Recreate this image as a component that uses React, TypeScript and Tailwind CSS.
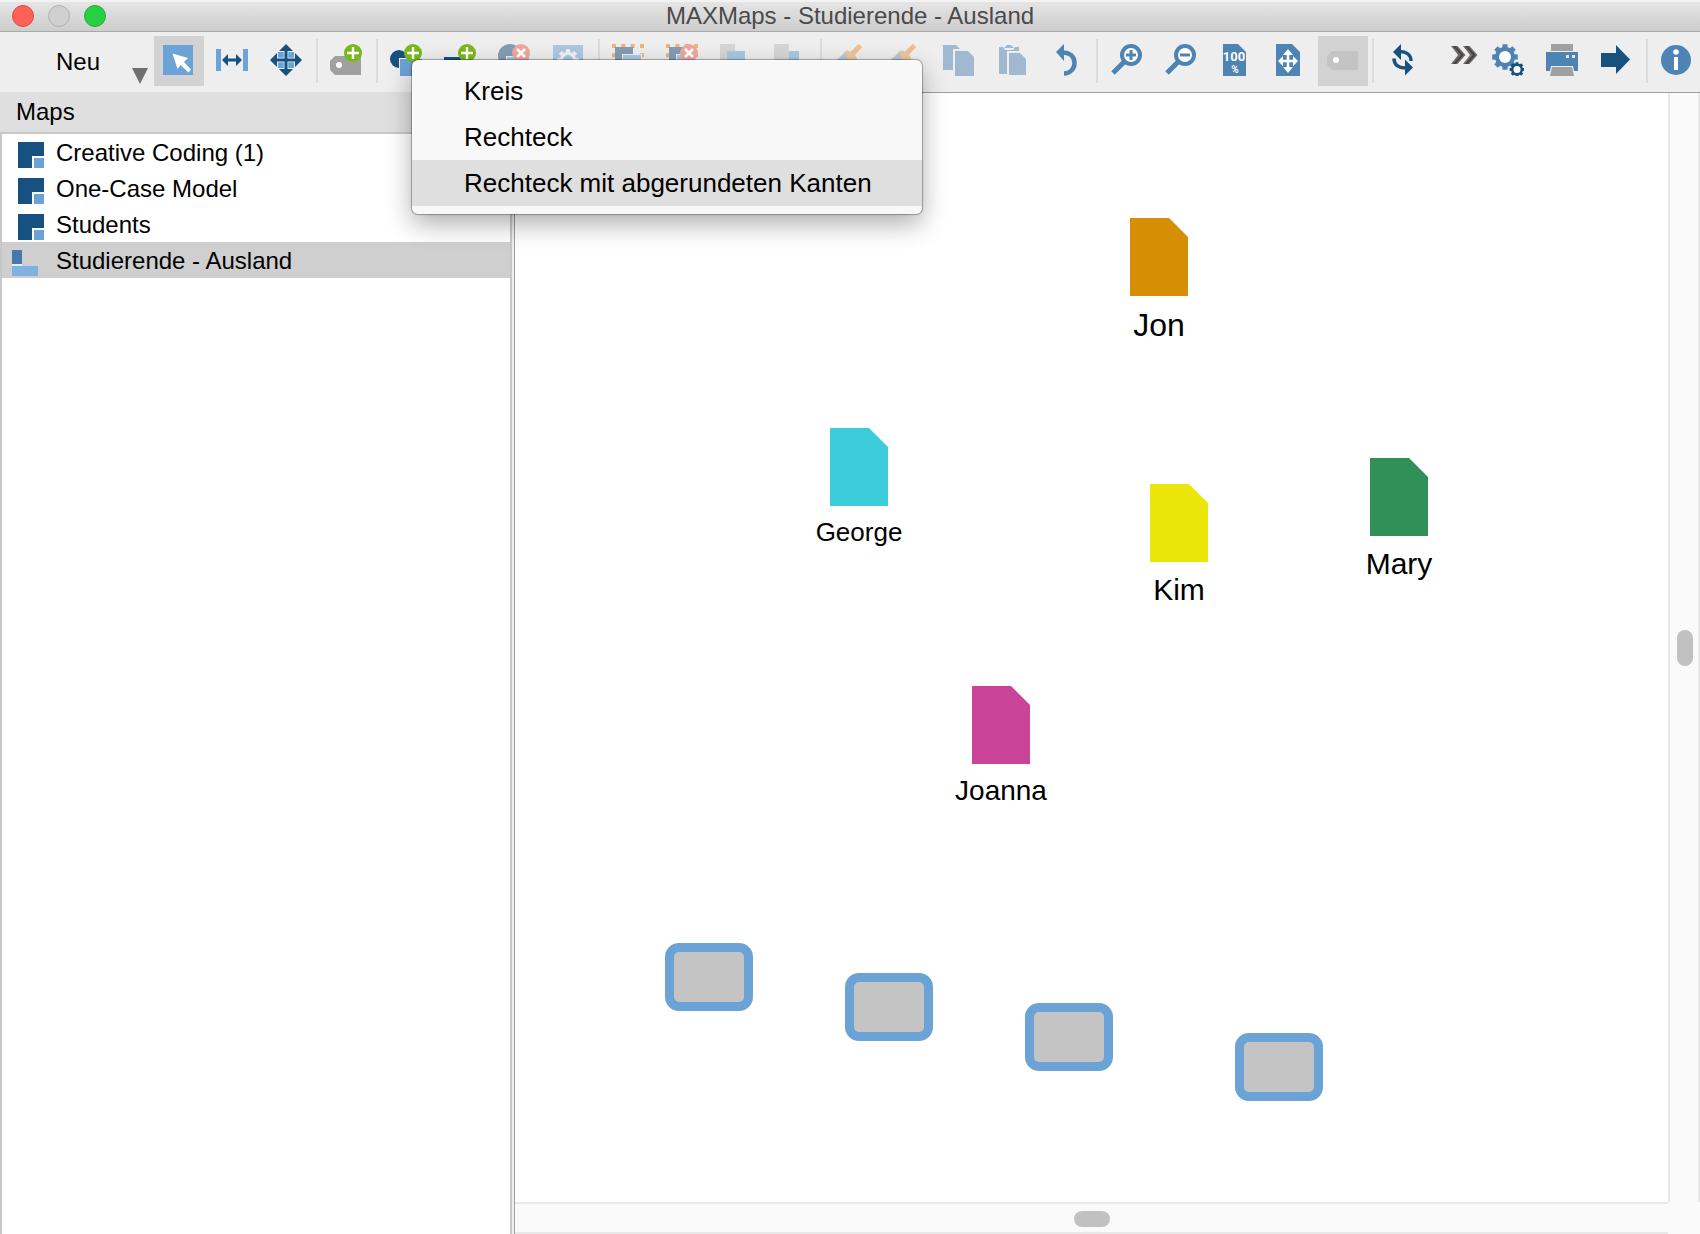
import type { ReactNode } from "react";
import { clsx } from "clsx";

const NAVY = "#17517f";
const BLUE = "#4d84b3";
const SKY = "#6ca3d6";
const GRAY = "#a0a0a0";

const gearPoints = (cx: number, cy: number, outer: number, inner: number) => {
  const teeth = 8;
  const points: string[] = [];
  for (let i = 0; i < teeth; i++) {
    const mid = (i * 2 * Math.PI) / teeth;
    [
      [-0.27, inner],
      [-0.19, outer],
      [0.19, outer],
      [0.27, inner],
    ].forEach(([offset, r]) => {
      const a = mid + offset;
      points.push(
        `${(cx + r * Math.cos(a)).toFixed(2)},${(cy + r * Math.sin(a)).toFixed(2)}`
      );
    });
  }
  return points.join(" ");
};

const Icon = ({ children }: { children: ReactNode }) => (
  <svg viewBox="0 0 32 32" className="size-8 shrink-0" aria-hidden="true">
    {children}
  </svg>
);

const PlusBadge = () => (
  <>
    <circle cx="23" cy="9" r="9" fill="#78b81c" />
    <path d="M23 3v12M17 9h12" stroke="#fff" strokeWidth="2.4" />
  </>
);

const DeleteBadge = () => (
  <>
    <circle cx="23" cy="9" r="9" fill="#eea79d" />
    <path d="M19 5l8 8M27 5l-8 8" stroke="#fff" strokeWidth="2.6" />
  </>
);

const SelectIcon = () => (
  <Icon>
    <path d="M1 1h30v30H1z" fill={SKY} />
    <path d="M10.5 9.5L26 14l-4 4 7 7.500-2.500 3-8-7.500-3 4z" fill="#fff" />
  </Icon>
);

const SpreadIcon = () => (
  <Icon>
    <path d="M0 5h5v22H0zM27 5h5v22h-5z" fill={SKY} />
    <path d="M6 16l6-6v4.5h8V10l6 6-6 6v-4.5h-8V22z" fill={NAVY} />
  </Icon>
);

const MoveIcon = () => (
  <Icon>
    <path d="M8 8h16v16H8z" fill={SKY} />
    <path d="M16 6v20M6 16h20" stroke="#eee" strokeWidth="4.4" />
    <path d="M16 5v22M5 16h22" stroke={NAVY} strokeWidth="3" />
    <path
      d="M16 0l7 7H9zM16 32l7-7H9zM0 16l7-7v14zM32 16l-7-7v14z"
      fill={NAVY}
    />
  </Icon>
);

const NewCodeIcon = () => (
  <Icon>
    <path d="M5 12h26v19H5l-5-5v-9z" fill={GRAY} />
    <circle cx="9" cy="21" r="3" fill="#fff" />
    <PlusBadge />
  </Icon>
);

const NewShapeIcon = () => (
  <Icon>
    <circle cx="9" cy="15" r="9" fill={NAVY} />
    <path d="M9 14h23v18H9z" fill="#eee" />
    <path d="M10 15h22v17H10z" fill={SKY} />
    <PlusBadge />
  </Icon>
);

const NewLineIcon = () => (
  <Icon>
    <path d="M0 13h17v4H0z" fill={NAVY} />
    <PlusBadge />
  </Icon>
);

const DeleteShapeIcon = () => (
  <Icon>
    <circle cx="12" cy="12" r="12" fill="#839db5" />
    <path d="M8 12h24v20H8z" fill="#eee" />
    <path d="M9 13h22v18H9z" fill="#a9c8e2" />
    <DeleteBadge />
  </Icon>
);

const MapSettingsIcon = () => (
  <Icon>
    <path d="M1 1h30v30H1z" fill="#a9c8e2" />
    <polygon points={gearPoints(16, 16, 11, 8)} fill="#f3f3f3" />
    <circle cx="16" cy="16" r="5" fill="#a9c8e2" />
  </Icon>
);

const SelectAllIcon = ({ remove = false }: { remove?: boolean }) => (
  <Icon>
    <path
      d="M0 2h32M2 0v32M30 0v32"
      stroke="#eeb27b"
      strokeWidth="4"
      strokeDasharray="4 5.333"
    />
    <path d="M3 3h18v18H3z" fill="#839db5" />
    <path d="M10 10h20v16H10z" fill="#eee" />
    <path d="M11 11h18v15H11z" fill="#a9c8e2" />
    {remove && <DeleteBadge />}
  </Icon>
);

const BringForwardIcon = () => (
  <Icon>
    <path d="M0 0h15v20H0z" fill="#d5d5d5" />
    <path d="M7 7h18v18H7z" fill="#a9c8e2" />
  </Icon>
);

const SendBackIcon = () => (
  <Icon>
    <path d="M7 7h18v18H7z" fill="#a9c8e2" />
    <path d="M0 0h15v20H0z" fill="#d5d5d5" />
  </Icon>
);

const BrushIcon = () => (
  <Icon>
    <path d="M26.500 1.500L16 12" stroke="#f0bf92" strokeWidth="5" />
    <path d="M13 6l4 2 5 4 2 6H13l-3-9z" fill="#ecc6a2" />
    <path d="M11 8l4 10H0l6-5z" fill="#b9c6d2" />
  </Icon>
);

const CopyIcon = () => (
  <Icon>
    <path d="M1 1h13l4 4h-7v21H1z" fill="#a0b8d0" />
    <path d="M13 7h13l6 6v19H13z" fill="#a0b8d0" />
  </Icon>
);

const PasteIcon = () => (
  <Icon>
    <path d="M3 3h4l2 3h8l2-3h4v4H11v23H3z" fill="#a0b8d0" />
    <path d="M8 4l3-3h4l3 3z" fill="#a0b8d0" />
    <path d="M13 9h11l6 6v16H13z" fill="#a0b8d0" />
  </Icon>
);

const UndoIcon = () => (
  <Icon>
    <path
      d="M12 8.500c8 0 12.500 4 12.500 10.500 0 6-4.500 10.500-10.500 10.500"
      fill="none"
      stroke={BLUE}
      strokeWidth="4.500"
    />
    <path d="M6 8l8-8v17z" fill={BLUE} />
  </Icon>
);

const ZoomIcon = ({ sign }: { sign: "in" | "out" }) => (
  <Icon>
    <path d="M14 18L3 29" stroke={BLUE} strokeWidth="5" />
    <circle cx="21" cy="11" r="9" fill="#fff" stroke={BLUE} strokeWidth="4" />
    <path
      d={sign === "in" ? "M21 6v10M16 11h10" : "M16 11h10"}
      stroke={BLUE}
      strokeWidth="3"
    />
  </Icon>
);

const FullSizeIcon = () => (
  <Icon>
    <path d="M5 0h15l8 8v24H5z" fill={BLUE} />
    <text
      x="16"
      y="17"
      textAnchor="middle"
      fill="#fff"
      className="font-[Roboto,sans-serif] text-[13px] font-bold"
    >
      100
    </text>
    <text
      x="17"
      y="29"
      textAnchor="middle"
      fill="#fff"
      className="font-[Roboto,sans-serif] text-[10px] font-bold"
    >
      %
    </text>
  </Icon>
);

const FitPageIcon = () => (
  <Icon>
    <path d="M4 0h16l8 8v24H4z" fill={BLUE} />
    <path d="M16 8v18M9 17h14" stroke="#fff" strokeWidth="2.500" />
    <path
      d="M16 5l5 6H11zM16 29l5-6H11zM6 17l5-5v10zM26 17l-5-5v10z"
      fill="#fff"
    />
  </Icon>
);

const LabelIcon = () => (
  <Icon>
    <path d="M6 7h26v19H6l-5-5v-9z" fill="#c3c3c3" />
    <circle cx="10" cy="16" r="3" fill="#fff" />
  </Icon>
);

const RefreshIcon = () => (
  <Icon>
    <path
      d="M14 7.500c6 0 11 3 11 9.500M19 24c-6 0-11-3-11-9.500"
      fill="none"
      stroke={NAVY}
      strokeWidth="3.500"
    />
    <path d="M7 8l8-8v16zM27 23.500l-8 8v-16z" fill={NAVY} />
  </Icon>
);

const MoreIcon = () => (
  <Icon>
    <path
      d="M3 2h6.500l8 9-8 9H3l7-9zM15 2h6.500l8 9-8 9H15l7-9z"
      fill="#6f6d6b"
    />
    <path
      d="M5 2h2.500l8 9-8 9H5l8-9zM17 2h2.500l8 9-8 9H17l8-9z"
      fill="#454341"
    />
  </Icon>
);

const SettingsIcon = () => (
  <Icon>
    <polygon points={gearPoints(13, 13, 13, 10)} fill={BLUE} />
    <circle cx="13" cy="13" r="6" fill="#fff" />
    <polygon points={gearPoints(25, 25.5, 7.5, 6)} fill={NAVY} />
    <circle cx="25" cy="25.5" r="3.500" fill="#fff" />
  </Icon>
);

const PrintIcon = () => (
  <Icon>
    <path d="M5 0h22v7H5z" fill={GRAY} />
    <path d="M0 8h32v19H0z" fill={BLUE} />
    <path d="M20 11h3v3h-3zM26 11h3v3h-3z" fill="#dbe6f0" />
    <path d="M5 22h22l2 10H3z" fill="#eee" />
    <path d="M6 23h20l2 9H4z" fill={GRAY} />
  </Icon>
);

const ExportIcon = () => (
  <Icon>
    <path d="M1 9h15V1l14 14.500L16 30v-7H1z" fill={NAVY} />
  </Icon>
);

const InfoIcon = () => (
  <Icon>
    <circle cx="16" cy="16" r="15" fill={BLUE} />
    <circle cx="16" cy="8" r="2.800" fill="#fff" />
    <path d="M14 13h4v13h-4z" fill="#fff" />
  </Icon>
);

type ToolProps = {
  label: string;
  active?: boolean;
  disabled?: boolean;
  children: ReactNode;
};

const Tool = ({ label, active, disabled, children }: ToolProps) => (
  <button
    type="button"
    aria-label={label}
    disabled={disabled}
    className={clsx(
      "flex h-[50px] w-[50px] shrink-0 items-center justify-center pr-0.5 pb-0.5",
      active && "bg-[#d2d2d2]"
    )}
  >
    {children}
  </button>
);

const Separator = () => (
  <div className="h-11 w-0.5 shrink-0 bg-[#dcdcdc]" />
);

const TitleBar = () => (
  <header className="relative flex h-8 shrink-0 items-center justify-center border-t-2 border-b border-t-[#f3f3f3] border-b-[#a9a9a9] bg-linear-to-b from-[#e5e5e5] to-[#cdcdcd] pb-0.5">
    <div className="absolute left-3 flex gap-3.5">
      <button
        type="button"
        aria-label="Schließen"
        className="size-[22px] rounded-full border border-[#e2463f] bg-[#ff6058]"
      />
      <button
        type="button"
        aria-label="Minimieren"
        className="size-[22px] rounded-full border border-[#b0b0b0] bg-[#d0d0d0]"
      />
      <button
        type="button"
        aria-label="Zoomen"
        className="size-[22px] rounded-full border border-[#1fae31] bg-[#28cf41]"
      />
    </div>
    <h1 className="text-2xl leading-7 text-[#4a4a4a]">
      MAXMaps - Studierende - Ausland
    </h1>
  </header>
);

const Toolbar = () => (
  <div className="flex h-[60px] shrink-0 items-center gap-1 overflow-hidden bg-[#eee] pb-0.5">
    <button
      type="button"
      className="flex h-[50px] w-[150px] shrink-0 items-center justify-between pt-0.5 pr-0.5 pl-14 text-2xl"
    >
      Neu
      <svg viewBox="0 0 16 16" className="mb-0.5 size-4 self-end">
        <path d="M0 0h16L8 16z" fill="#707070" />
      </svg>
    </button>
    <Tool label="Auswahl" active>
      <SelectIcon />
    </Tool>
    <Tool label="Abstand">
      <SpreadIcon />
    </Tool>
    <Tool label="Verschieben">
      <MoveIcon />
    </Tool>
    <Separator />
    <Tool label="Neuer Code">
      <NewCodeIcon />
    </Tool>
    <Separator />
    <Tool label="Neues Objekt">
      <NewShapeIcon />
    </Tool>
    <Tool label="Neue Linie">
      <NewLineIcon />
    </Tool>
    <Tool label="Objekt entfernen" disabled>
      <DeleteShapeIcon />
    </Tool>
    <Tool label="Objekteigenschaften" disabled>
      <MapSettingsIcon />
    </Tool>
    <Separator />
    <Tool label="Gruppieren" disabled>
      <SelectAllIcon />
    </Tool>
    <Tool label="Gruppierung aufheben" disabled>
      <SelectAllIcon remove />
    </Tool>
    <Tool label="Nach vorne" disabled>
      <BringForwardIcon />
    </Tool>
    <Tool label="Nach hinten" disabled>
      <SendBackIcon />
    </Tool>
    <Separator />
    <Tool label="Format kopieren" disabled>
      <BrushIcon />
    </Tool>
    <Tool label="Format übertragen" disabled>
      <BrushIcon />
    </Tool>
    <Tool label="Kopieren" disabled>
      <CopyIcon />
    </Tool>
    <Tool label="Einfügen" disabled>
      <PasteIcon />
    </Tool>
    <Tool label="Rückgängig">
      <UndoIcon />
    </Tool>
    <Separator />
    <Tool label="Vergrößern">
      <ZoomIcon sign="in" />
    </Tool>
    <Tool label="Verkleinern">
      <ZoomIcon sign="out" />
    </Tool>
    <Tool label="Originalgröße">
      <FullSizeIcon />
    </Tool>
    <Tool label="Einpassen">
      <FitPageIcon />
    </Tool>
    <Tool label="Beschriftungen" active>
      <LabelIcon />
    </Tool>
    <Separator />
    <Tool label="Aktualisieren">
      <RefreshIcon />
    </Tool>
    <button
      type="button"
      aria-label="Mehr"
      className="flex h-[50px] flex-1 items-center justify-end pb-0.5"
    >
      <MoreIcon />
    </button>
    <Tool label="Einstellungen">
      <SettingsIcon />
    </Tool>
    <Tool label="Drucken">
      <PrintIcon />
    </Tool>
    <Tool label="Exportieren">
      <ExportIcon />
    </Tool>
    <Separator />
    <button
      type="button"
      aria-label="Info"
      className="flex h-[50px] w-12 shrink-0 items-center justify-center pb-0.5"
    >
      <InfoIcon />
    </button>
  </div>
);

const maps = [
  { name: "Creative Coding (1)" },
  { name: "One-Case Model" },
  { name: "Students" },
  { name: "Studierende - Ausland", selected: true },
];

const MapIcon = ({ open }: { open?: boolean }) => (
  <svg
    viewBox="0 0 32 26"
    className="mb-0.5 h-[26px] w-8 shrink-0 self-end"
    aria-hidden="true"
  >
    {open ? (
      <>
        <path d="M0 0h10v14H0z" fill="#4679ab" />
        <path d="M0 14h10v2H0z" fill="#e8eef4" />
        <path d="M0 16h26v10H0z" fill="#7fb2e1" />
      </>
    ) : (
      <>
        <path d="M6 0h26v14H20v12H6z" fill={NAVY} />
        <path d="M22 16h10v10H22z" fill={SKY} />
      </>
    )}
  </svg>
);

const Sidebar = () => (
  <aside className="flex w-[512px] shrink-0 flex-col">
    <h2 className="h-10 bg-[#dfdfdf] pl-4 text-2xl leading-10">Maps</h2>
    <ul className="flex-1 border-2 border-b-0 border-[#c8c8c8] bg-white">
      {maps.map(({ name, selected }) => (
        <li key={name}>
          <button
            type="button"
            className={clsx(
              "flex h-9 w-full items-center gap-3 pt-0.5 pl-2.5 text-2xl",
              selected && "bg-[#cfcfcf]"
            )}
          >
            <MapIcon open={selected} />
            {name}
          </button>
        </li>
      ))}
    </ul>
  </aside>
);

const documents = [
  { name: "Jon", place: "left-[615px] top-[125px]", text: "text-[32px]", fill: "#d68f04" },
  { name: "George", place: "left-[315px] top-[335px]", text: "text-[26px]", fill: "#3dccdb" },
  { name: "Kim", place: "left-[635px] top-[391px]", text: "text-[30px]", fill: "#eae609" },
  { name: "Mary", place: "left-[855px] top-[365px]", text: "text-[30px]", fill: "#2f9158" },
  { name: "Joanna", place: "left-[457px] top-[593px]", text: "text-[28px]", fill: "#c94399" },
];

const shapes = [
  "left-[150px] top-[850px]",
  "left-[330px] top-[880px]",
  "left-[510px] top-[910px]",
  "left-[720px] top-[940px]",
];

const Canvas = () => (
  <main className="flex min-w-0 flex-1 flex-col border-t border-l border-[#a0a0a0] bg-[#fafafa]">
    <div className="flex min-h-0 flex-1">
      <div className="relative min-w-0 flex-1 overflow-hidden bg-white">
        {documents.map(({ name, place, text, fill }) => (
          <figure
            key={name}
            className={clsx("absolute flex w-[58px] flex-col items-center", place)}
          >
            <svg viewBox="0 0 58 78" className="h-[78px] w-[58px]">
              <path d="M0 0h39l19 19v59H0z" fill={fill} />
            </svg>
            <figcaption className={clsx("mt-[13px] leading-none whitespace-nowrap", text)}>
              {name}
            </figcaption>
          </figure>
        ))}
        {shapes.map((place) => (
          <div
            key={place}
            className={clsx(
              "absolute h-[68px] w-[88px] rounded-[14px] border-[9px] border-[#6ca3d6] bg-[#c4c4c4]",
              place
            )}
          />
        ))}
      </div>
      <div className="flex w-8 items-center justify-center border-x-2 border-[#e8e8e8] pl-0.5">
        <div className="h-9 w-4 rounded-full bg-[#c1c1c1]" />
      </div>
    </div>
    <div className="mr-8 flex h-8 shrink-0 items-center justify-center border-y-2 border-[#e8e8e8] pt-0.5">
      <div className="h-4 w-9 rounded-full bg-[#c1c1c1]" />
    </div>
  </main>
);

const menuItems = ["Kreis", "Rechteck", "Rechteck mit abgerundeten Kanten"];

const ShapeMenu = () => (
  <div
    role="menu"
    className="absolute top-[60px] left-[412px] z-10 flex w-[510px] flex-col rounded-md bg-[#f8f8f8] py-2 shadow-[0_0_1px_1px_rgba(0,0,0,0.3),0_10px_26px_rgba(0,0,0,0.32)]"
  >
    {menuItems.map((item, i) => (
      <button
        key={item}
        type="button"
        role="menuitem"
        className={clsx(
          "h-[46px] pl-[52px] text-left text-[26px]",
          i === 2 && "bg-[#dfdfdf]"
        )}
      >
        {item}
      </button>
    ))}
  </div>
);

export default function App() {
  return (
    <div className="relative flex h-screen flex-col overflow-hidden bg-[#eee] font-['Liberation_Sans',Arial,sans-serif] text-black">
      <TitleBar />
      <Toolbar />
      <div className="flex min-h-0 flex-1 gap-0.5">
        <Sidebar />
        <Canvas />
      </div>
      <ShapeMenu />
    </div>
  );
}
